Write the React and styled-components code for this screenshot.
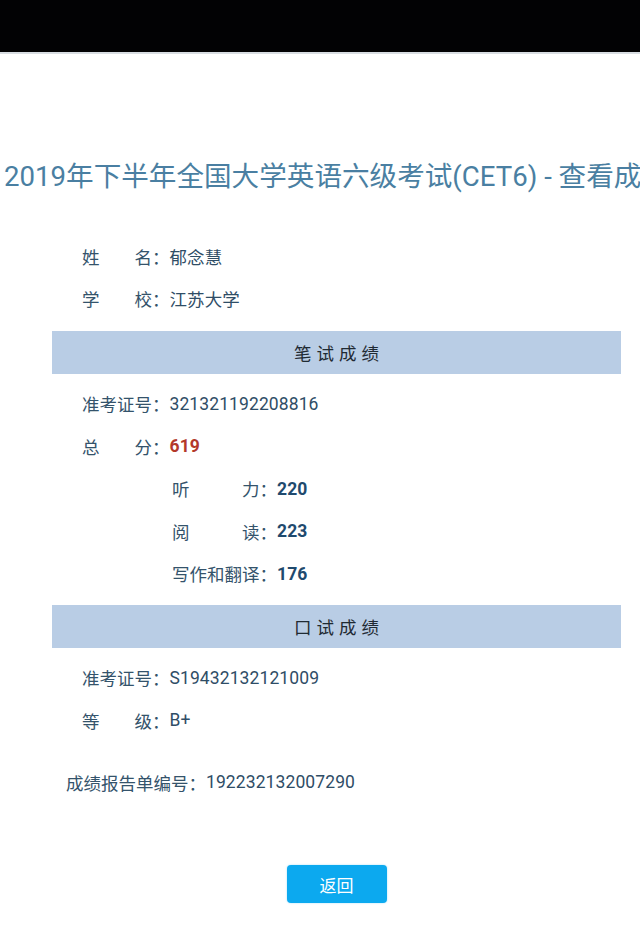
import React from "react";
import styled, { createGlobalStyle } from "styled-components";

const Global = createGlobalStyle`
  html, body { margin: 0; padding: 0; background: #fff; }
  body { font-family: Roboto, "Noto Sans CJK SC", sans-serif; overflow: hidden; }
  #root { width: 640px; min-height: 928px; overflow: hidden; }
`;

const Page = styled.div`
  width: 640px;
  height: 928px;
  display: flex;
  flex-direction: column;
  background: #fff;
  overflow: hidden;
`;

const StatusBar = styled.div`
  height: 52px;
  flex: none;
  background: #020204;
  border-bottom: 2px solid #d8dde2;
`;

const Title = styled.h1`
  margin: 105px 0 0;
  padding-left: 4px;
  font-size: 27.6px;
  font-weight: 400;
  line-height: 36px;
  height: 36px;
  white-space: nowrap;
  color: #4a7fa2;
  font-family: Roboto, "Noto Sans CJK SC", sans-serif;
`;

const Content = styled.div`
  margin: 40px 19px 0 52px;
  display: flex;
  flex-direction: column;
`;

const Row = styled.div`
  height: 42.4px;
  display: flex;
  align-items: center;
  padding-left: ${(p) => p.$indent}px;
  font-size: 17.5px;
  color: #34536b;
  margin-top: ${(p) => p.$mt || 0}px;
`;

const Label = styled.span`
  display: inline-block;
  width: ${(p) => p.$chars * 17.5}px;
  text-align: justify;
  text-align-last: justify;
  white-space: nowrap;
`;

const Colon = styled.span`
  display: inline-block;
  width: 17.5px;
`;

const Value = styled.span`
  font-weight: ${(p) => (p.$bold ? 700 : 400)};
  color: ${(p) => p.$color || "#2f4d66"};
  letter-spacing: 0.1px;
`;

const SectionBar = styled.div`
  height: 43px;
  margin: ${(p) => p.$mt}px 0 8.5px;
  background: #b9cde5;
  display: flex;
  align-items: center;
  justify-content: center;
  font-size: 17.5px;
  letter-spacing: 5px;
  padding-left: 5px;
  color: #1f2a33;
`;

const ButtonWrap = styled.div`
  display: flex;
  justify-content: center;
  margin-top: 62px;
`;

const BackButton = styled.button`
  width: 100px;
  height: 38px;
  border: none;
  border-radius: 4px;
  background: #0ca9ef;
  color: #fff;
  font-size: 17px;
  font-family: Roboto, "Noto Sans CJK SC", sans-serif;
  box-shadow: 0 0 2px rgba(12, 169, 239, 0.4);
`;

function Field({ label, chars, value, indent = 30, bold, color, mt }) {
  return (
    <Row $indent={indent} $mt={mt}>
      <Label $chars={chars}>{label}</Label>
      <Colon>：</Colon>
      <Value $bold={bold} $color={color}>{value}</Value>
    </Row>
  );
}

export default function App() {
  return (
    <>
      <Global />
      <Page>
        <StatusBar />
        <Title>2019年下半年全国大学英语六级考试(CET6) - 查看成绩</Title>
        <Content>
          <Field label="姓名" chars={4} value="郁念慧" />
          <Field label="学校" chars={4} value="江苏大学" />
          <SectionBar $mt={11.5}>笔试成绩</SectionBar>
          <Field label="准考证号" chars={4} value="321321192208816" />
          <Field label="总分" chars={4} value="619" bold color="#b3382b" />
          <Field label="听力" chars={5} value="220" bold color="#1f4a6e" indent={120} />
          <Field label="阅读" chars={5} value="223" bold color="#1f4a6e" indent={120} />
          <Field label="写作和翻译" chars={5} value="176" bold color="#1f4a6e" indent={120} />
          <SectionBar $mt={10.5}>口试成绩</SectionBar>
          <Field label="准考证号" chars={4} value="S19432132121009" />
          <Field label="等级" chars={4} value="B+" />
          <Field label="成绩报告单编号" chars={7} value="192232132007290" indent={14} mt={19.5} />
          <ButtonWrap>
            <BackButton>返回</BackButton>
          </ButtonWrap>
        </Content>
      </Page>
    </>
  );
}
